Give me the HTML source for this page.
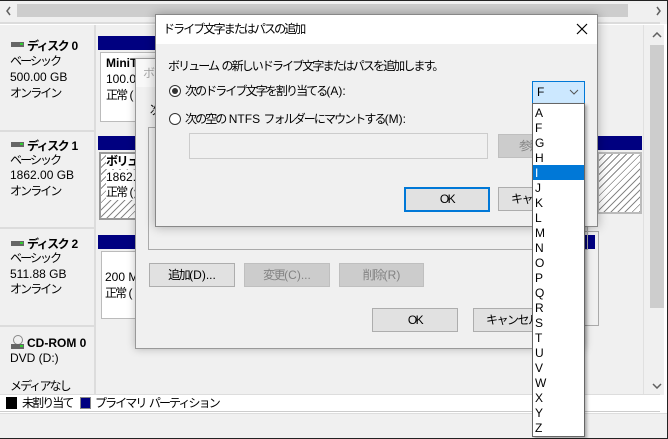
<!DOCTYPE html>
<html><head><meta charset="utf-8"><style>
*{margin:0;padding:0;box-sizing:border-box}
body{width:668px;height:439px;overflow:hidden;background:#fff;font-family:"Liberation Sans","Noto Sans CJK JP",sans-serif;font-size:12px;color:#000;position:relative}
.a{position:absolute}
.t{position:absolute;white-space:nowrap;line-height:15px}
.j{letter-spacing:-1.9px}
.b{font-weight:bold;letter-spacing:-1.5px}
.l{letter-spacing:0}
.btn{position:absolute;background:#e1e1e1;border:1px solid #adadad;text-align:center;line-height:22px;font-size:12px;letter-spacing:-1.5px;white-space:nowrap;overflow:hidden}
.dis{background:#cccccc;border-color:#bfbfbf;color:#838383}
.hatch{background:repeating-linear-gradient(135deg,#fff 0 4px,#888 4px 5px)}
.ic{position:absolute;width:13px;height:5px;background:#666}
.ic::after{content:"";position:absolute;right:1px;top:1px;width:3px;height:2px;background:#3c3}
</style></head><body>
<div class="a" style="left:0;top:0;width:668px;height:439px;border:1px solid #222;border-left:0"></div>
<div class="a" style="left:0;top:1px;width:667px;height:23px;background:#f0f0f0"></div>
<div class="a" style="left:17px;top:4px;width:611px;height:13px;background:#cdcdcd"></div>
<svg class="a" style="left:5px;top:6px" width="8" height="10"><path d="M5 1L2 5L5 9" fill="none" stroke="#606060" stroke-width="1.5"/></svg>
<svg class="a" style="left:655px;top:6px" width="8" height="10"><path d="M2 1L5 5L2 9" fill="none" stroke="#606060" stroke-width="1.5"/></svg>
<div class="a" style="left:0;top:22px;width:660px;height:2px;background:#dcdcdc"></div>
<div class="a" style="left:0;top:25px;width:96px;height:370px;background:#f0f0f0"></div>
<div class="a" style="left:96px;top:25px;width:548px;height:370px;background:#f0f0f0"></div>
<div class="a" style="left:0;top:130px;width:96px;height:2px;background:#dcdcdc"></div>
<div class="a" style="left:0;top:227px;width:96px;height:2px;background:#dcdcdc"></div>
<div class="a" style="left:0;top:325px;width:96px;height:2px;background:#dcdcdc"></div>
<div class="a" style="left:94px;top:25px;width:2px;height:370px;background:#dcdcdc"></div>

<div class="ic" style="left:11px;top:42px"></div>
<div class="t b" style="left:27px;top:39px">ディスク<span class="l"> 0</span></div>
<div class="t j" style="left:10px;top:54px">ベーシック</div>
<div class="t" style="left:10px;top:70px">500.00 GB</div>
<div class="t j" style="left:10px;top:86px">オンライン</div>

<div class="ic" style="left:11px;top:142px"></div>
<div class="t b" style="left:27px;top:139px">ディスク<span class="l"> 1</span></div>
<div class="t j" style="left:10px;top:153px">ベーシック</div>
<div class="t" style="left:10px;top:168px">1862.00 GB</div>
<div class="t j" style="left:10px;top:184px">オンライン</div>

<div class="ic" style="left:11px;top:241px"></div>
<div class="t b" style="left:27px;top:237px">ディスク<span class="l"> 2</span></div>
<div class="t j" style="left:10px;top:251px">ベーシック</div>
<div class="t" style="left:10px;top:267px">511.88 GB</div>
<div class="t j" style="left:10px;top:282px">オンライン</div>

<div class="a" style="left:13px;top:335px;width:10px;height:10px;border:1px solid #888;border-radius:50%"></div>
<div class="ic" style="left:11px;top:344px"></div>
<div class="t" style="left:27px;top:336px;font-weight:bold">CD-ROM 0</div>
<div class="t" style="left:10px;top:351px">DVD (D:)</div>
<div class="t j" style="left:10px;top:379px">メディアなし</div>

<div class="a" style="left:98px;top:36px;width:60px;height:14px;background:#000080"></div>
<div class="a" style="left:100px;top:52px;width:58px;height:70px;background:#fff;border:1px solid #bbb"></div>
<div class="t" style="left:106px;top:56px;font-weight:bold">MiniT</div>
<div class="t" style="left:106px;top:72px">100.00</div>
<div class="t j" style="left:106px;top:88px">正常<span class="l"> (</span></div>

<div class="a" style="left:98px;top:136px;width:60px;height:14px;background:#000080"></div>
<div class="a hatch" style="left:99px;top:152px;width:59px;height:68px;border:2px solid #999"></div>
<div class="t b" style="left:106px;top:154px;background:#fff">ボリュー</div>
<div class="t" style="left:106px;top:170px;background:#fff">1862.0</div>
<div class="t j" style="left:106px;top:185px;background:#fff">正常<span class="l"> (</span></div>

<div class="a" style="left:98px;top:235px;width:60px;height:14px;background:#000080"></div>
<div class="a" style="left:101px;top:251px;width:57px;height:68px;background:#fff;border:1px solid #bbb"></div>
<div class="t" style="left:105px;top:270px">200 M</div>
<div class="t j" style="left:105px;top:286px">正常<span class="l"> (</span></div>

<div class="a" style="left:585px;top:136px;width:57px;height:14px;background:#000080"></div>
<div class="a hatch" style="left:597px;top:152px;width:45px;height:62px;border:2px solid #bbb"></div>
<div class="a" style="left:585px;top:235px;width:10px;height:14px;background:#000080"></div>
<div class="a" style="left:585px;top:231px;width:14px;height:95px;border:1px solid #aaa;border-left:0"></div>

<div class="a" style="left:643px;top:25px;width:21px;height:370px;background:#f0f0f0;border-left:1px solid #e0e0e0"></div>
<div class="a" style="left:650px;top:45px;width:14px;height:263px;background:#cdcdcd"></div>
<svg class="a" style="left:652px;top:32px" width="10" height="6"><path d="M1 5L5 1L9 5" fill="none" stroke="#606060" stroke-width="1.5"/></svg>
<svg class="a" style="left:652px;top:383px" width="10" height="6"><path d="M1 1L5 5L9 1" fill="none" stroke="#606060" stroke-width="1.5"/></svg>

<div class="a" style="left:0;top:394px;width:660px;height:18px;background:#fff;border-top:1px solid #ddd;border-bottom:1px solid #ccc"></div>
<div class="a" style="left:6px;top:397px;width:11px;height:12px;background:#000"></div>
<div class="t j" style="left:22px;top:396px">未割り当て</div>
<div class="a" style="left:80px;top:397px;width:11px;height:12px;background:#000080;border:1px solid #888"></div>
<div class="t j" style="left:95px;top:396px">プライマリ<span class="l"> </span>パーティション</div>
<div class="a" style="left:0;top:413px;width:667px;height:25px;background:#f0f0f0;border-top:1px solid #ddd"></div>

<div class="a" style="left:135px;top:58px;width:450px;height:291px;background:#f0f0f0;border:1px solid #999;box-shadow:0 0 8px rgba(0,0,0,.25)"></div>
<div class="a" style="left:136px;top:59px;width:448px;height:28px;background:#f8f8f8"></div>
<div class="t" style="left:143px;top:66px;color:#aaa">ボ</div>
<div class="t" style="left:150px;top:103px">次</div>
<div class="a" style="left:148px;top:127px;width:440px;height:123px;border:1px solid #aaa"></div>
<div class="btn" style="left:149px;top:263px;width:86px;height:24px">追加<span class="l">(D)...</span></div>
<div class="btn dis" style="left:244px;top:263px;width:86px;height:24px">変更<span class="l">(C)...</span></div>
<div class="btn dis" style="left:339px;top:263px;width:85px;height:24px">削除<span class="l">(R)</span></div>
<div class="btn" style="left:372px;top:308px;width:86px;height:24px">OK</div>
<div class="btn" style="left:473px;top:308px;width:86px;height:24px;text-align:left;padding-left:12px">キャンセル</div>

<div class="a" style="left:155px;top:14px;width:443px;height:213px;background:#f0f0f0;border:1px solid #888;box-shadow:0 0 10px rgba(0,0,0,.3)"></div>
<div class="a" style="left:156px;top:15px;width:441px;height:29px;background:#fff"></div>
<div class="t j" style="left:163px;top:22px">ドライブ文字またはパスの追加</div>
<svg class="a" style="left:576px;top:23px" width="12" height="12"><path d="M1 1L11 11M11 1L1 11" stroke="#000" stroke-width="1.2"/></svg>
<div class="t j" style="left:168px;top:59px">ボリューム<span class="l"> </span>の新しいドライブ文字またはパスを追加します。</div>
<div class="a" style="left:169px;top:85px;width:12px;height:12px;border:1px solid #333;border-radius:50%;background:#fff"></div>
<div class="a" style="left:172px;top:88px;width:6px;height:6px;border-radius:50%;background:#333"></div>
<div class="t j" style="left:185px;top:84px">次のドライブ文字を割り当てる<span class="l">(A):</span></div>
<div class="a" style="left:169px;top:113px;width:12px;height:12px;border:1px solid #333;border-radius:50%;background:#fff"></div>
<div class="t j" style="left:185px;top:112px">次の空の<span class="l"> NTFS </span>フォルダーにマウントする<span class="l">(M):</span></div>
<div class="a" style="left:189px;top:133px;width:299px;height:26px;border:1px solid #ccc;background:#f0f0f0"></div>
<div class="btn dis" style="left:498px;top:134px;width:86px;height:24px;text-align:left;padding-left:20px">参照</div>
<div class="btn" style="left:404px;top:187px;width:86px;height:25px;border:2px solid #0078d7;line-height:21px">OK</div>
<div class="btn" style="left:498px;top:187px;width:86px;height:24px;text-align:left;padding-left:12px">キャンセル</div>

<div class="a" style="left:532px;top:81px;width:53px;height:23px;background:#cce8ff;border:1px solid #0078d7"></div>
<div class="t" style="left:537px;top:85px">F</div>
<svg class="a" style="left:569px;top:89px" width="10" height="6"><path d="M1 1L5 5L9 1" fill="none" stroke="#555" stroke-width="1"/></svg>

<div class="a" style="left:532px;top:103px;width:53px;height:334px;background:#fff;border:1px solid #666;box-shadow:2px 2px 3px rgba(0,0,0,.3)"></div>
<div class="a" style="left:533px;top:165px;width:51px;height:15px;background:#0078d7"></div>
<div class="a" style="left:535px;top:106px;line-height:15px;font-size:12px">
A<br>F<br>G<br>H<br><span style="color:#fff">I</span><br>J<br>K<br>L<br>M<br>N<br>O<br>P<br>Q<br>R<br>S<br>T<br>U<br>V<br>W<br>X<br>Y<br>Z
</div>
</body></html>
